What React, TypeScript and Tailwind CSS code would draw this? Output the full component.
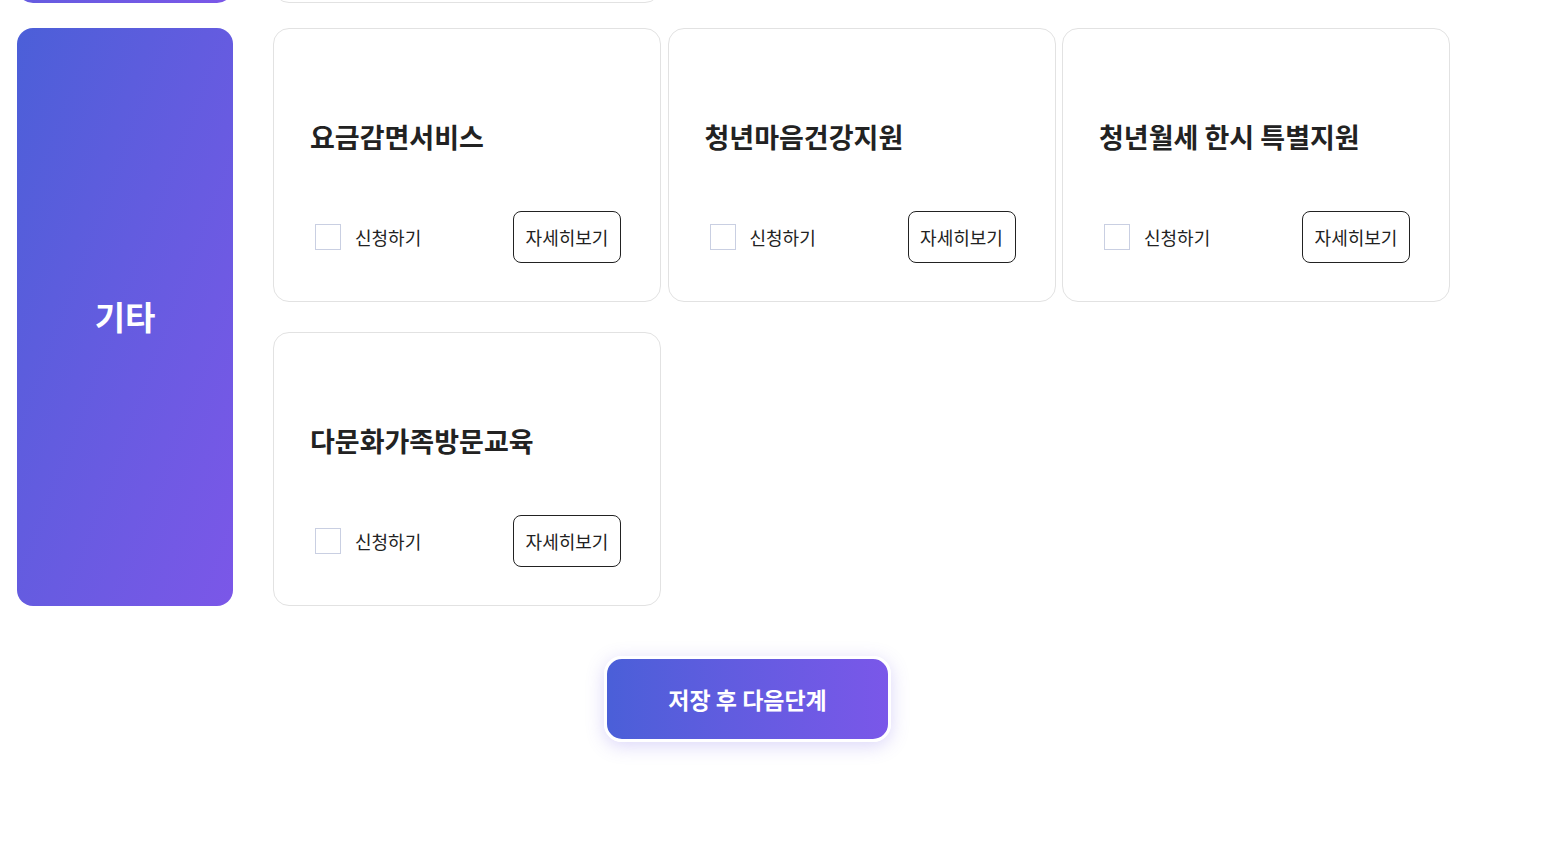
import React from "react"

interface Service {
  id: number
  name: string
}

const services: Service[] = [
  { id: 1, name: "요금감면서비스" },
  { id: 2, name: "청년마음건강지원" },
  { id: 3, name: "청년월세 한시 특별지원" },
  { id: 4, name: "다문화가족방문교육" },
]

const ServiceCard = ({ service }: { service: Service }) => {
  return (
    <div className="h-[274px] bg-white border border-[#e2e2e2] rounded-[16px] pl-[36px] pr-[39px] pb-[38px] flex flex-col justify-end">

      {/* TITLE */}
      <h3 className="text-[27px] leading-[36px] font-bold text-[#222]">
        {service.name}
      </h3>

      {/* FOOTER */}
      <div className="mt-[56px] flex items-center justify-between">
        <label className="flex items-center gap-[14px] ml-[5px] cursor-pointer">
          <span className="w-[26px] h-[26px] border border-[#c9cfe2] bg-white block" />
          <span className="text-[18px] text-[#222]">신청하기</span>
        </label>

        <button className="w-[108px] h-[52px] border border-[#222] rounded-[8px] text-[18px] text-[#222] bg-white">
          자세히보기
        </button>
      </div>
    </div>
  )
}

const App = () => {
  return (
    <div
      className="min-h-[856px] bg-white overflow-hidden"
      style={{ fontFamily: '"Noto Sans CJK KR", "Noto Sans", sans-serif' }}
    >
      <div className="mt-[-297px] flex flex-col gap-[25px]">

        {/* PREVIOUS SECTION (scrolled out) */}
        <div className="flex pl-[17px] gap-[40px]">
          <div className="w-[216px] h-[300px] rounded-[16px] bg-gradient-to-br from-[#4b5fd8] to-[#7b57e8]" />
          <div className="w-[388px] h-[300px] border border-[#e2e2e2] rounded-[16px]" />
        </div>

        {/* 기타 SECTION */}
        <div className="flex pl-[17px] gap-[40px]">
          <div className="w-[216px] shrink-0 rounded-[16px] bg-gradient-to-br from-[#4b5fd8] to-[#7b57e8] flex items-center justify-center">
            <span className="text-[33px] font-bold text-white">기타</span>
          </div>

          <div className="grid grid-cols-[388px_388px_388px] gap-x-[6.5px] gap-y-[30px]">
            {services.map(s => (
              <ServiceCard key={s.id} service={s} />
            ))}
          </div>
        </div>

        {/* SUBMIT */}
        <div className="flex justify-center pr-[50px] pt-[25px]">
          <button className="w-[287px] h-[86px] rounded-[18px] border-[3px] border-white bg-gradient-to-r from-[#4a5fd8] to-[#7a57e9] text-white text-[23px] font-bold shadow-[0_4px_18px_rgba(110,90,230,0.25)]">
            저장 후 다음단계
          </button>
        </div>

      </div>
    </div>
  )
}

export default App
